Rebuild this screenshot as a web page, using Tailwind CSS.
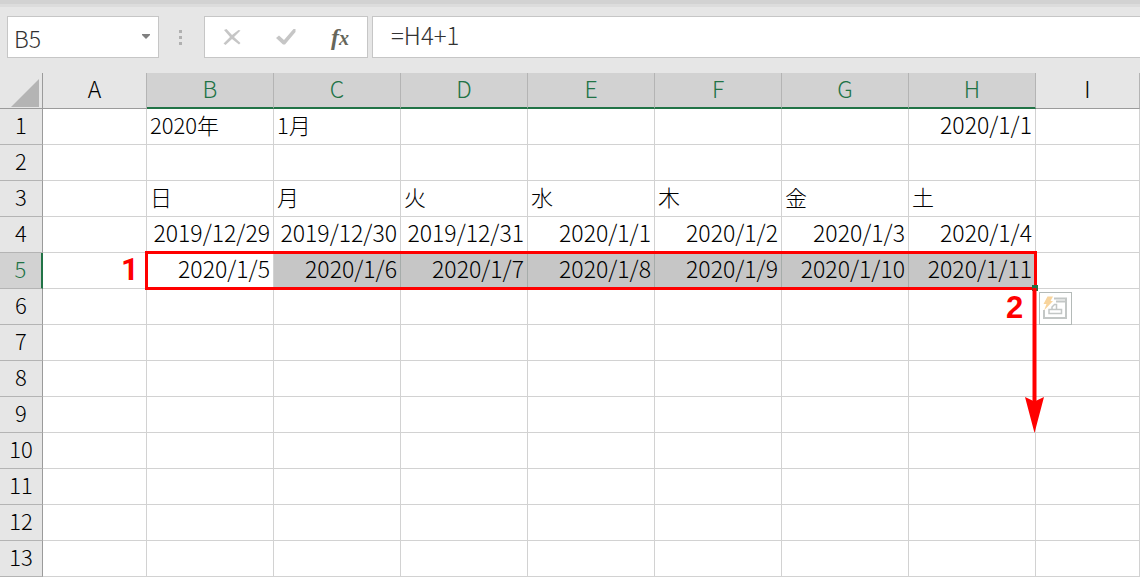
<!DOCTYPE html>
<html lang="ja">
<head>
<meta charset="utf-8">
<title>Calendar sheet</title>
<script src="https://cdn.jsdelivr.net/npm/@tailwindcss/browser@4"></script>
</head>
<body class="bg-[#e6e6e6] font-['Noto_Sans_CJK_JP',sans-serif] font-light text-[22px] text-black overflow-hidden">
<div class="h-1 bg-[#d2d2d2]"></div>
<div class="h-[3px] bg-[#dcdcdc]"></div>

<header class="flex items-stretch h-[42px] mt-[9px] mb-[15px] pl-[7px]">
  <div class="flex items-center w-[152px] bg-white border border-[#c6c6c6]">
    <input aria-label="Name box" value="B5" class="min-w-0 flex-1 h-full pl-[6px] pt-[2px] text-[23px] text-[#333] outline-none">
    <button aria-label="Open name list" class="w-6 h-full flex items-center justify-center">
      <svg width="8" height="5" viewBox="0 0 8 5" class="mb-[2px]"><path d="M0 0H8V1L4 5L0 1Z" fill="#808080"/></svg>
    </button>
  </div>
  <div class="w-[45px] flex flex-col items-center justify-center gap-[3px] pr-[2px]">
    <span class="size-[3px] bg-[#b0b0b0]"></span><span class="size-[3px] bg-[#b0b0b0]"></span><span class="size-[3px] bg-[#b0b0b0]"></span>
  </div>
  <div class="grid grid-cols-3 w-[164px] bg-white border border-[#c6c6c6] mr-1">
    <button aria-label="Cancel" class="flex items-center justify-center">
      <svg width="18" height="18" viewBox="0 0 18 18"><path d="M1 2L3.500 1L9 7L15.500 2L17.500 2.500L11 9L17.500 15L16 16.500L9 11L2.500 17L.5 15.500L7 9Z" fill="#c6c6c6"/></svg>
    </button>
    <button aria-label="Enter" class="flex items-center justify-center">
      <svg width="20" height="18" viewBox="0 0 20 18"><path d="M0 10L3 7.500L8 12L17.500 1H19.500V4L9 16.500H7Z" fill="#c6c6c6"/></svg>
    </button>
    <button aria-label="Insert function" class="flex items-center justify-center font-['Liberation_Serif',serif] font-bold italic text-[#66665a]"><span class="text-2xl leading-6">f</span><span class="text-xl leading-6 pt-[2px]">x</span></button>
  </div>
  <input aria-label="Formula bar" value="=H4+1" class="min-w-0 flex-1 bg-white border border-r-0 border-[#c6c6c6] pl-[18px] pb-1 text-2xl text-[#333] outline-none">
</header>

<main class="relative">
<table id="sheet" class="table-fixed w-full border-separate border-spacing-0 bg-white leading-[30px]">
  <colgroup>
    <col class="w-[43px]"><col class="w-[104px]"><col class="w-[127px]"><col class="w-[127px]"><col class="w-[127px]"><col class="w-[127px]"><col class="w-[127px]"><col class="w-[127px]"><col class="w-[127px]"><col>
  </colgroup>
  <thead><tr id="heads"></tr></thead>
  <tbody id="rows"></tbody>
</table>

<div class="absolute left-[145px] top-[178px] w-[892px] h-[39px] border-3 border-[#ff0000]"></div>
<span class="absolute left-[121px] top-[179px] font-[Roboto,sans-serif] font-bold text-[31px] leading-9 text-[#ff0000]">1</span>
<span class="absolute left-[1006px] top-[217px] font-['Liberation_Sans',sans-serif] font-bold text-[31px] leading-9 text-[#ff0000]">2</span>
<svg class="absolute left-[1024px] top-[211px]" width="22" height="150" viewBox="0 0 22 150">
  <path d="M8 1H14V7H8Z" fill="#217346"/><path d="M8.500 4H12.500V120H8.500Z" fill="#ff0000"/><path d="M1 113L10.500 117.500L20 113L10.500 149Z" fill="#ff0000"/>
</svg>
<button aria-label="Quick analysis" class="absolute left-[1039px] top-[219px] size-[33px] bg-white border border-[#b4bab8]">
  <svg width="31" height="31" viewBox="0 0 31 31" fill="none">
    <path d="M14 5.500H26V25H4V17M16 8.500H26" stroke="#c3c7c6" stroke-width="2"/>
    <path d="M9 20.500V16.500H21.500V20.500ZM12 16.500V14L14.500 11.500H16.500V16.500" stroke="#c3c7c6" stroke-width="1.500"/>
    <path d="M7.500 3.500H13L10.500 8H13L4 17.500L6.500 11H3.500Z" fill="#f8d49c"/>
  </svg>
</button>
</main>

<script>
  const cells = {
    1: { B: '2020年', C: '1月', H: '2020/1/1' },
    3: { B: '日', C: '月', D: '火', E: '水', F: '木', G: '金', H: '土' },
    4: { B: '2019/12/29', C: '2019/12/30', D: '2019/12/31', E: '2020/1/1', F: '2020/1/2', G: '2020/1/3', H: '2020/1/4' },
    5: { B: '2020/1/5', C: '2020/1/6', D: '2020/1/7', E: '2020/1/8', F: '2020/1/9', G: '2020/1/10', H: '2020/1/11' }
  };
  const columns = [...'ABCDEFGHI'];
  const picked = c => c >= 'B' && c <= 'H';
  document.getElementById('heads').innerHTML =
    '<th class="h-9 p-0 bg-[#e6e6e6] border-r border-b border-[#9b9b9b]"><button aria-label="Select all" class="block ml-[11px] mt-1"><svg width="28" height="28" viewBox="0 0 28 28"><path d="M28 0V28H0Z" fill="#b4b4b4"/></svg></button></th>' +
    columns.map(c => `<th scope="col" class="h-9 p-0 font-light text-[23px] border-r ${picked(c)
      ? 'pb-1 bg-[#d2d2d2] text-[#217346] border-r-[#b4b4b4] border-b-2 border-b-[#217346]'
      : 'pb-[5px] bg-[#e6e6e6] border-r-[#b4b4b4] border-b border-b-[#9b9b9b]'}">${c}</th>`).join('');
  let html = '';
  for (let r = 1; r <= 13; r++) {
    html += `<tr><th scope="row" class="h-9 p-0 pb-[5px] font-light border-b border-b-[#b4b4b4] ${r === 5
      ? 'bg-[#d2d2d2] text-[#217346] border-r-2 border-r-[#217346]'
      : 'bg-[#e6e6e6] border-r border-r-[#9b9b9b]'}">${r}</th>`;
    for (const c of columns) {
      const v = (cells[r] && cells[r][c]) || '';
      const align = v.includes('/') ? 'text-right text-[23px]' : 'text-left';
      const fill = r === 5 && c > 'B' && c <= 'H' ? 'bg-[#c6c6c6] border-r-[#a6acaa]' : 'border-r-[#d2d2d2]';
      html += `<td class="h-9 pt-0 pb-[5px] pl-[3px] pr-[3px] whitespace-nowrap border-r border-b border-b-[#d2d2d2] ${align} ${fill}">${v}</td>`;
    }
    html += '</tr>';
  }
  document.getElementById('rows').innerHTML = html;
</script>
</body>
</html>
